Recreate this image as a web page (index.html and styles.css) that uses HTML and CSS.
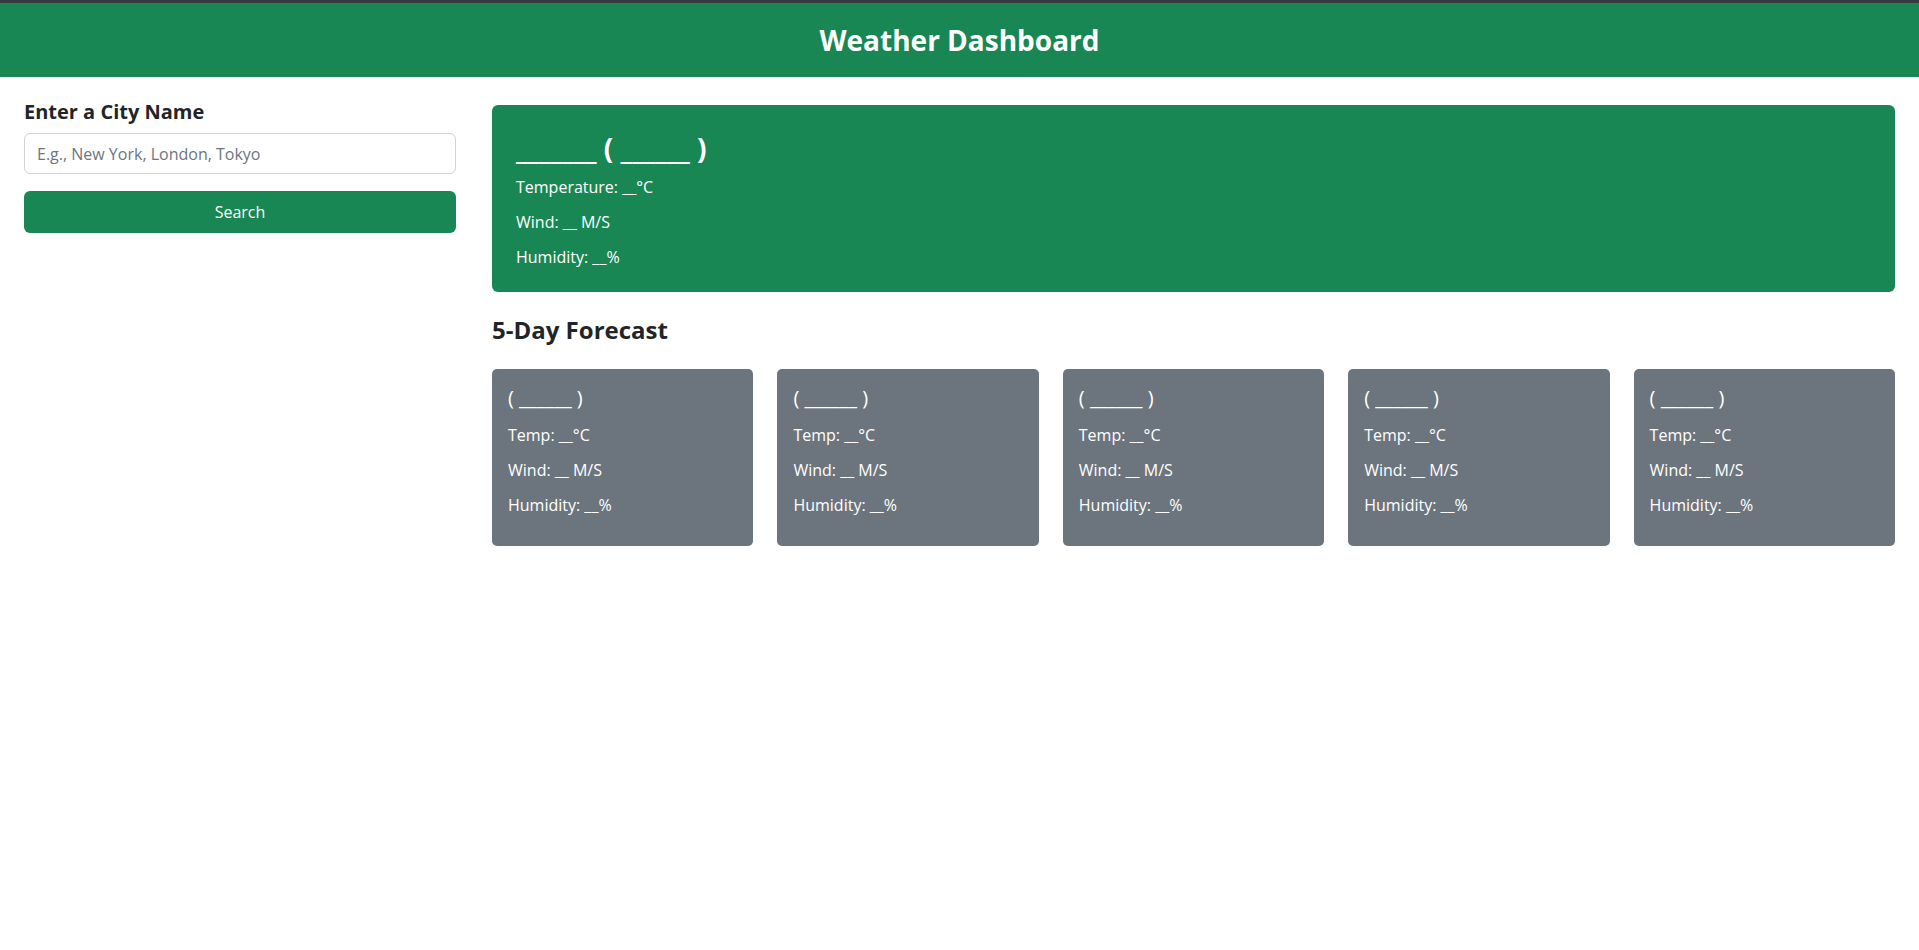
FILE: index.html
```html
<!DOCTYPE html>
<html lang="en">
<head>
<meta charset="utf-8">
<title>Weather Dashboard</title>
<link rel="stylesheet" href="styles.css">
</head>
<body>
<header class="app-header">
  <h1 class="app-title">Weather Dashboard</h1>
</header>
<main class="layout">
  <aside class="search-col">
    <h2 class="search-label">Enter a City Name</h2>
    <input class="city-input" type="text" placeholder="E.g., New York, London, Tokyo">
    <button class="search-btn" type="button">Search</button>
  </aside>
  <section class="results-col">
    <div class="current-card">
      <h3 class="current-title">_______ ( ______ )</h3>
      <p class="stat">Temperature: __°C</p>
      <p class="stat">Wind: __ M/S</p>
      <p class="stat">Humidity: __%</p>
    </div>
    <h3 class="forecast-heading">5-Day Forecast</h3>
    <div class="forecast-grid">
      <div class="forecast-card">
        <h4 class="forecast-date">( ______ )</h4>
        <p class="stat">Temp: __°C</p>
        <p class="stat">Wind: __ M/S</p>
        <p class="stat">Humidity: __%</p>
      </div>
      <div class="forecast-card">
        <h4 class="forecast-date">( ______ )</h4>
        <p class="stat">Temp: __°C</p>
        <p class="stat">Wind: __ M/S</p>
        <p class="stat">Humidity: __%</p>
      </div>
      <div class="forecast-card">
        <h4 class="forecast-date">( ______ )</h4>
        <p class="stat">Temp: __°C</p>
        <p class="stat">Wind: __ M/S</p>
        <p class="stat">Humidity: __%</p>
      </div>
      <div class="forecast-card">
        <h4 class="forecast-date">( ______ )</h4>
        <p class="stat">Temp: __°C</p>
        <p class="stat">Wind: __ M/S</p>
        <p class="stat">Humidity: __%</p>
      </div>
      <div class="forecast-card">
        <h4 class="forecast-date">( ______ )</h4>
        <p class="stat">Temp: __°C</p>
        <p class="stat">Wind: __ M/S</p>
        <p class="stat">Humidity: __%</p>
      </div>
    </div>
  </section>
</main>
</body>
</html>
```
FILE: styles.css
```css
* { box-sizing: border-box; }

html, body {
  margin: 0;
  padding: 0;
  background: #ffffff;
}

body {
  font-family: "Open Sans", "Noto Sans", "Liberation Sans", sans-serif;
  font-size: 16px;
  color: #212529;
}

.app-header {
  background: #198754;
  border-top: 3px solid #343a40;
  height: 77px;
  text-align: center;
}

.app-title {
  margin: 0;
  font-size: 28px;
  font-weight: 700;
  line-height: 74px;
  color: #ffffff;
}

.layout {
  display: grid;
  grid-template-columns: 432px 1fr;
  column-gap: 36px;
  padding: 23px 24px 24px;
}

.search-col {
  display: flex;
  flex-direction: column;
}

.search-label {
  margin: 0 0 9px;
  font-size: 20px;
  font-weight: 700;
  line-height: 24px;
}

.city-input {
  height: 41px;
  margin: 0 0 17px;
  padding: 0 12px;
  border: 1px solid #ced4da;
  border-radius: 6px;
  font-family: inherit;
  font-size: 16px;
  color: #212529;
  background: #ffffff;
}

.city-input::placeholder {
  color: #6c757d;
  opacity: 1;
}

.search-btn {
  height: 42px;
  border: none;
  border-radius: 6px;
  background: #198754;
  color: #ffffff;
  font-family: inherit;
  font-size: 16px;
  line-height: 24px;
  cursor: pointer;
}

.results-col {
  padding-top: 5px;
}

.current-card {
  background: #198754;
  color: #ffffff;
  border-radius: 6px;
  padding: 25px 24px 23px;
}

.current-title {
  margin: 0 0 9px;
  font-size: 28px;
  font-weight: 700;
  line-height: 36px;
}

.stat {
  margin: 0 0 11px;
  line-height: 24px;
}

.current-card .stat:last-child {
  margin-bottom: 0;
}

.forecast-heading {
  margin: 20px 0 21px;
  font-size: 24px;
  font-weight: 700;
  line-height: 36px;
}

.forecast-grid {
  display: grid;
  grid-template-columns: repeat(5, 1fr);
  column-gap: 24px;
}

.forecast-card {
  background: #6c757d;
  color: #ffffff;
  border-radius: 5px;
  padding: 16px 16px 17px;
}

.forecast-date {
  margin: 0 0 12px;
  font-size: 20px;
  font-weight: 500;
  line-height: 26px;
}

.forecast-card .stat:last-child {
  margin-bottom: 12px;
}
```
